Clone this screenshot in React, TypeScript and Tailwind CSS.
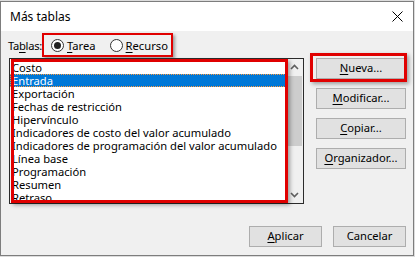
import React from 'react';

const ITEMS = [
  'Costo',
  'Entrada',
  'Exportación',
  'Fechas de restricción',
  'Hipervínculo',
  'Indicadores de costo del valor acumulado',
  'Indicadores de programación del valor acumulado',
  'Línea base',
  'Programación',
  'Resumen',
  'Retraso',
];

// mnemonic helper: underline one letter like a Win32 dialog
const Mn: React.FC<{ pre?: string; key_: string; post: string }> = ({ pre = '', key_, post }) => (
  <span>
    {pre}
    <span className="underline underline-offset-[2px]">{key_}</span>
    {post}
  </span>
);

const Btn: React.FC<{ children: React.ReactNode; className?: string }> = ({ children, className = '' }) => (
  <button
    className={`h-[21px] bg-[#e1e1e1] border border-[#adadad] text-[11.2px] text-black flex items-center justify-center ${className}`}
  >
    {children}
  </button>
);

const Radio: React.FC<{ checked?: boolean }> = ({ checked }) => (
  <span className="w-[13px] h-[13px] rounded-full border border-[#333] bg-white flex items-center justify-center">
    {checked && <span className="w-[7px] h-[7px] rounded-full bg-[#222]" />}
  </span>
);

export default function App() {
  return (
    <div
      className="w-[415px] h-[257px] bg-[#dcdcdc] overflow-hidden pt-[1px]"
      style={{ fontFamily: '"Segoe UI", "Noto Sans", sans-serif' }}
    >
      <div className="w-[414px] h-[255px] border border-[#7d7d7d] flex flex-col">
        {/* Title bar */}
        <div className="h-[29px] bg-white flex items-center pl-[9px] pr-[9px]">
          <span className="text-[12px] text-black leading-none">Más tablas</span>
          <svg className="ml-auto mr-[1px]" width="11" height="11" viewBox="0 0 11 11">
            <path d="M0.5 0.5 L10.5 10.5 M10.5 0.5 L0.5 10.5" stroke="#000" strokeWidth="1" />
          </svg>
        </div>

        {/* Body */}
        <div className="flex-1 bg-[#f0f0f0] text-[11.2px] text-black px-[7px]">
          {/* Tablas row */}
          <div className="mt-[2px] h-[24px] flex items-center">
            <span className="w-[34px] shrink-0 pt-[2px] tracking-[-0.3px] whitespace-nowrap"><Mn pre="Ta" key_="b" post="las:" /></span>
            <div className="h-[24px] w-[131px] shrink-0 border-2 border-[#e00000] shadow-[2px_2px_3px_rgba(0,0,0,0.35)] flex items-center pl-[7px]">
              <Radio checked />
              <span className="ml-[3px] pt-[2px]"><Mn key_="T" post="area" /></span>
              <span className="ml-[14px]"><Radio /></span>
              <span className="ml-[3px] pt-[2px]"><Mn key_="R" post="ecurso" /></span>
            </div>
          </div>

          <div className="flex mt-[1px]">
            {/* List box */}
            <div className="relative w-[296px] h-[146px] border border-[#2b2b2b] bg-white flex ml-[1px]">
              <div className="flex-1 pt-[2px] overflow-hidden">
                {ITEMS.map((it, i) => (
                  <div
                    key={it}
                    className={`h-[13px] leading-[13px] pl-[2px] whitespace-nowrap ${
                      i === 1 ? 'bg-[#0078d7] text-white outline-1 outline-dotted outline-[#ff9a3c] -outline-offset-1' : ''
                    }`}
                  >
                    {it}
                  </div>
                ))}
              </div>
              {/* Scrollbar */}
              <div className="w-[17px] bg-[#f0f0f0] flex flex-col items-center">
                <svg className="mt-[5px]" width="9" height="6" viewBox="0 0 9 6">
                  <path d="M1 5 L4.5 1.5 L8 5" stroke="#606060" strokeWidth="1.6" fill="none" />
                </svg>
                <div className="mt-[6px] w-[15px] h-[70px] bg-[#cdcdcd]" />
                <svg className="mt-auto mb-[5px]" width="9" height="6" viewBox="0 0 9 6">
                  <path d="M1 1 L4.5 4.5 L8 1" stroke="#606060" strokeWidth="1.6" fill="none" />
                </svg>
              </div>
              {/* annotation highlight over the list */}
              <div className="absolute left-[1px] top-0 w-[277px] h-[144px] border-[3px] border-[#e00000] shadow-[2px_2px_4px_rgba(0,0,0,0.35)] pointer-events-none" />
            </div>

            {/* Right buttons */}
            <div className="ml-[12px] flex flex-col gap-[9px]">
              <div className="relative">
                <Btn className="w-[90px]"><Mn key_="N" post="ueva..." /></Btn>
                <div className="absolute -left-[6px] -top-[5px] w-[97px] h-[29px] border-[3px] border-[#e00000] shadow-[2px_2px_4px_rgba(0,0,0,0.35)] pointer-events-none" />
              </div>
              <Btn className="w-[90px]"><Mn key_="M" post="odificar..." /></Btn>
              <Btn className="w-[90px]"><Mn key_="C" post="opiar..." /></Btn>
              <Btn className="w-[90px]"><Mn key_="O" post="rganizador..." /></Btn>
            </div>
          </div>

          {/* Bottom buttons */}
          <div className="flex justify-end gap-[11px] mt-[22px]">
            <Btn className="w-[73px]"><Mn key_="A" post="plicar" /></Btn>
            <Btn className="w-[73px]">Cancelar</Btn>
          </div>
        </div>
      </div>
    </div>
  );
}
